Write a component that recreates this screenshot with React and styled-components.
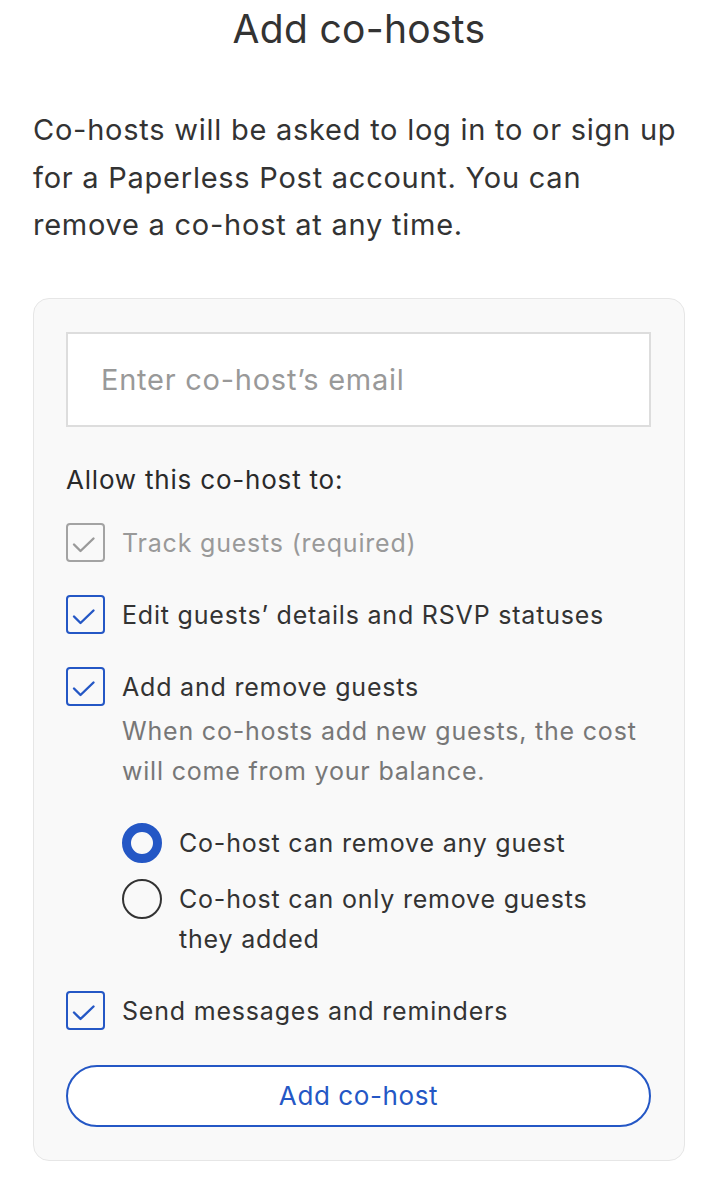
import React from "react";
import styled, { createGlobalStyle } from "styled-components";

const Global = createGlobalStyle`
  html, body { margin: 0; padding: 0; background: #ffffff; }
  body { font-family: Inter, "Noto Sans", "Liberation Sans", sans-serif; color: #333333; }
  * { box-sizing: border-box; }
`;

const Page = styled.div`
  width: 714px;
  padding: 0 29px 0 33px;
`;

const Title = styled.h1`
  margin: 0;
  font-size: 39px;
  font-weight: 400;
  letter-spacing: 0.3px;
  line-height: 58px;
  text-align: center;
  color: #333;
`;

const Intro = styled.p`
  margin: 48px 0 49px;
  font-size: 29px;
  letter-spacing: 0.75px;
  line-height: 47.5px;
  color: #333;
`;

const Card = styled.div`
  width: 652px;
  background: #f9f9f9;
  border: 1px solid #e6e6e6;
  border-radius: 16px;
  padding: 33px 33px 33px 32px;
  display: flex;
  flex-direction: column;
`;

const EmailInput = styled.input`
  width: 585px;
  height: 95px;
  border: 2px solid #dddddd;
  background: #ffffff;
  padding: 0 33px;
  font-family: inherit;
  font-size: 29px;
  letter-spacing: 0.75px;
  color: #333;
  outline: none;
  &::placeholder { color: #999999; }
`;

const SectionLabel = styled.div`
  margin-top: 33px;
  font-size: 26px;
  letter-spacing: 0.8px;
  line-height: 40px;
  color: #2a2a2a;
`;

const Options = styled.div`
  margin-top: 23px;
  display: flex;
  flex-direction: column;
  gap: 32px;
`;

const Row = styled.div`
  display: flex;
  align-items: flex-start;
  gap: 17px;
`;

const Box = styled.span`
  flex: none;
  width: 39px;
  height: 39px;
  border: 2px solid ${(p) => (p.$disabled ? "#a3a3a3" : "#2457c5")};
  border-radius: 4px;
  display: flex;
  align-items: center;
  justify-content: center;
  color: ${(p) => (p.$disabled ? "#9a9a9a" : "#2457c5")};
  background: transparent;
`;

const LabelBlock = styled.div`
  display: flex;
  flex-direction: column;
`;

const LabelText = styled.div`
  font-size: 25px;
  letter-spacing: 0.8px;
  line-height: 40px;
  color: ${(p) => (p.$disabled ? "#999999" : "#333333")};
`;

const Desc = styled.div`
  margin-top: 4px;
  font-size: 25px;
  letter-spacing: 0.8px;
  line-height: 40px;
  color: #777777;
  width: 540px;
`;

const RadioGroup = styled.div`
  margin-top: 32px;
  display: flex;
  flex-direction: column;
  gap: 16px;
`;

const Radio = styled.span`
  flex: none;
  width: 40px;
  height: 40px;
  border-radius: 50%;
  border: ${(p) => (p.$checked ? "9px solid #2457c5" : "2px solid #333333")};
  background: transparent;
`;

const RadioText = styled.div`
  font-size: 25px;
  letter-spacing: 0.8px;
  line-height: 40px;
  color: #333;
  width: 440px;
`;

const Button = styled.button`
  margin-top: 34px;
  width: 585px;
  height: 62px;
  border: 2px solid #2457c5;
  border-radius: 31px;
  background: #ffffff;
  color: #2457c5;
  font-family: inherit;
  font-size: 26px;
  letter-spacing: 0.6px;
  cursor: pointer;
`;

const Check = () => (
  <svg width="35" height="35" viewBox="0 0 35 35">
    <path d="M6 19.5 L12.5 26 L25.5 13.5" fill="none" stroke="currentColor" strokeWidth="2.4" strokeLinecap="round" strokeLinejoin="round" />
  </svg>
);

const CheckRow = ({ disabled, children, desc }) => (
  <Row>
    <Box $disabled={disabled}>
      <Check />
    </Box>
    <LabelBlock>
      <LabelText $disabled={disabled}>{children}</LabelText>
      {desc && <Desc>{desc}</Desc>}
    </LabelBlock>
  </Row>
);

export default function App() {
  return (
    <>
      <Global />
      <Page>
        <Title>Add co-hosts</Title>
        <Intro>
          Co-hosts will be asked to log in to or sign up for a Paperless Post account. You can remove a co-host at any time.
        </Intro>
        <Card>
          <EmailInput placeholder="Enter co-host’s email" />
          <SectionLabel>Allow this co-host to:</SectionLabel>
          <Options>
            <CheckRow disabled>Track guests (required)</CheckRow>
            <CheckRow>Edit guests’ details and RSVP statuses</CheckRow>
            <Row>
              <Box>
                <Check />
              </Box>
              <LabelBlock>
                <LabelText>Add and remove guests</LabelText>
                <Desc>When co-hosts add new guests, the cost will come from your balance.</Desc>
                <RadioGroup>
                  <Row>
                    <Radio $checked />
                    <RadioText>Co-host can remove any guest</RadioText>
                  </Row>
                  <Row>
                    <Radio />
                    <RadioText>Co-host can only remove guests they added</RadioText>
                  </Row>
                </RadioGroup>
              </LabelBlock>
            </Row>
            <CheckRow>Send messages and reminders</CheckRow>
          </Options>
          <Button>Add co-host</Button>
        </Card>
      </Page>
    </>
  );
}
